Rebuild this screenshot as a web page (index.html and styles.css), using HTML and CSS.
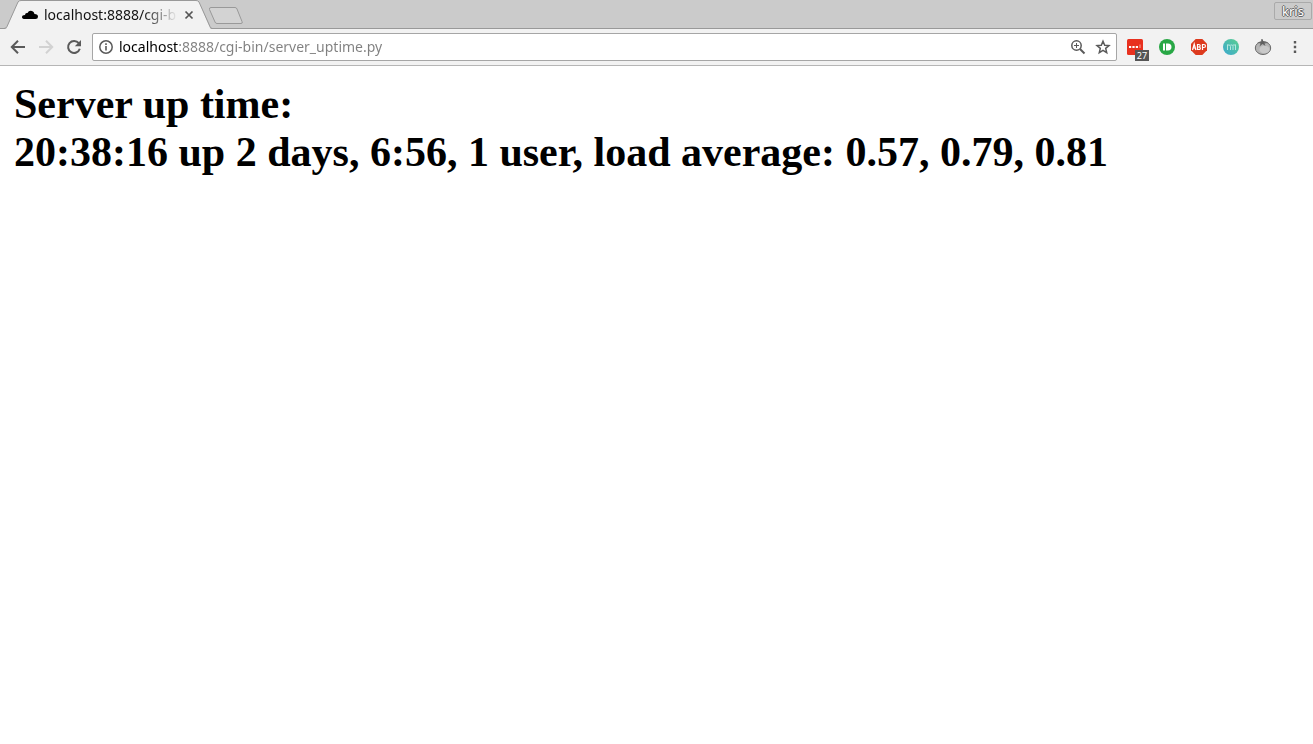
FILE: index.html
```html
<!DOCTYPE html>
<html lang="en">
<head>
<meta charset="utf-8">
<title>localhost:8888/cgi-bin/server_uptime.py</title>
<link rel="stylesheet" href="styles.css">
</head>
<body>
<header class="tabstrip">
  <div class="tab">
    <svg class="tab-shape" width="208" height="29" viewBox="0 0 208 29" aria-hidden="true">
      <path d="M0 29L2.500 28.200L14 2Q15 .5 17 .5H192Q194 .5 195 2L206 28.200L208 29Z" fill="#f2f2f2"/>
      <path d="M0 28.500Q2 28.500 3 26.500L14 2Q15 .5 17 .5H192Q194 .5 195 2L206 26.500Q207 28.500 208 28.500" fill="none" stroke="#999"/>
    </svg>
    <svg class="favicon" width="16" height="16" viewBox="0 0 16 16" aria-hidden="true"><path d="M3 12Q0 12 0 10Q0 8 3 8Q3.200 5.500 5.500 6Q7 3 10 4Q12 4.500 12.500 7Q16 7 16 9.800Q16 12 13.500 12Z"/></svg>
    <span class="tab-title">localhost:8888/cgi-b</span>
    <button class="tab-close" aria-label="Close tab"><svg width="10" height="10" viewBox="0 0 10 10"><path d="M1.500 1.500L8.500 8.500M8.500 1.500L1.500 8.500" stroke="#555" stroke-width="1.700"/></svg></button>
  </div>
  <button class="new-tab" aria-label="New tab"><svg width="36" height="18" viewBox="0 0 36 18"><path d="M3 .5H27Q28.500 .5 29 2L34 14.500Q35 16.500 33 16.500H9Q7.500 16.500 7 15L1.500 2.500Q1 .5 3 .5Z" fill="#d3d3d3" stroke="#999"/></svg></button>
  <button class="profile">kris</button>
</header>
<nav class="toolbar">
  <button class="tool" aria-label="Back"><svg width="16" height="16" viewBox="0 0 16 16"><path d="M15 8H2.500M8 1.800L1.800 8L8 14.200" fill="none" stroke="#5a5a5a" stroke-width="2"/></svg></button>
  <button class="tool" aria-label="Forward"><svg width="16" height="16" viewBox="0 0 16 16"><path d="M1 8H13.500M8 1.800L14.200 8L8 14.200" fill="none" stroke="#d2d2d2" stroke-width="2"/></svg></button>
  <button class="tool" aria-label="Reload"><svg width="16" height="16" viewBox="0 0 16 16"><path d="M12.800 4.200A6 6 0 1 0 13.800 9.800" fill="none" stroke="#5a5a5a" stroke-width="2"/><path d="M15 1V7.200H8.800Z" fill="#5a5a5a"/></svg></button>
  <div class="omnibox">
    <button class="omni-button" aria-label="Site information"><svg width="16" height="16" viewBox="0 0 16 16"><circle cx="8" cy="8" r="6.200" fill="none" stroke="#5a5a5a" stroke-width="1.500"/><path d="M8 7V11.500M8 4.300V6" stroke="#5a5a5a" stroke-width="1.600"/></svg></button>
    <input class="address" type="text" aria-label="Address" value="localhost:8888/cgi-bin/server_uptime.py" spellcheck="false">
    <button class="omni-button" aria-label="Zoom"><svg width="16" height="16" viewBox="0 0 16 16"><circle cx="6.500" cy="6.500" r="4.700" fill="none" stroke="#5a5a5a" stroke-width="1.500"/><path d="M10 10L14.500 14.500" stroke="#5a5a5a" stroke-width="2"/><path d="M4 6.500H9M6.500 4V9" stroke="#5a5a5a"/></svg></button>
    <button class="omni-button star" aria-label="Bookmark"><svg width="16" height="16" viewBox="0 0 16 16"><path d="M8 2.200L9.700 6.200L14 6.600L10.700 9.400L11.700 13.700L8 11.400L4.300 13.700L5.300 9.400L2 6.600L6.300 6.200Z" fill="none" stroke="#5a5a5a" stroke-width="1.500"/></svg></button>
  </div>
  <div class="extensions">
    <button class="tool" aria-label="Password manager, 27"><svg width="16" height="16" viewBox="0 0 16 16"><rect width="16" height="16" rx="1.500" fill="#e8311f"/><path d="M2 7H4.200V9H2ZM5.400 7H7.600V9H5.400ZM8.800 7H11V9H8.800Z" fill="#fff"/><path d="M12.500 5.500H13.500V9H12.500Z" fill="#f6a79f"/></svg><span class="count">27</span></button>
    <button class="tool" aria-label="Pushbullet"><svg width="16" height="16" viewBox="0 0 16 16"><circle cx="8" cy="8" r="8" fill="#28a745"/><path d="M4 4.500H6V11.500H4ZM7 4.500H9Q12.500 4.800 12.500 8T9 11.500H7Z" fill="#fff"/></svg></button>
    <button class="tool" aria-label="Adblock Plus"><svg width="16" height="16" viewBox="0 0 16 16"><path d="M4.700 0H11.300L16 4.700V11.300L11.300 16H4.700L0 11.300V4.700Z" fill="#dd3a1e"/><path d="M1.500 11L3.200 5L4.900 11M2 9H4.500M6.500 5V11M6.500 5.500H7.800Q9.200 5.500 9.200 6.700T7.800 8H6.500M7.800 8Q9.400 8 9.400 9.300T7.800 10.500H6.500M11.500 11V5.500H12.800Q14.500 5.500 14.500 7T12.800 8.500H11.500" fill="none" stroke="#fff" stroke-width="1.200"/></svg></button>
    <button class="tool" aria-label="Momentum"><svg width="16" height="16" viewBox="0 0 16 16"><defs><linearGradient id="teal" x1="0" y1="1" x2="1" y2="0"><stop stop-color="#3ba8cf"/><stop offset="1" stop-color="#5bcf8f"/></linearGradient></defs><circle cx="8" cy="8" r="8" fill="url(#teal)"/><path d="M4.500 11V5.500M4.500 6H6Q7.500 6 7.500 7.500V11M7.500 6H9Q10 6 10 7.500V11M12.500 5.500V11M10 6H12.500" fill="none" stroke="#b5e8df"/></svg></button>
    <button class="tool" aria-label="Tomato timer"><svg width="18" height="16" viewBox="0 0 18 16"><ellipse cx="9" cy="9" rx="7.700" ry="6.500" fill="#b5b5b5" stroke="#686868"/><ellipse cx="10.500" cy="10.500" rx="5" ry="3.800" fill="#c9c9c9"/><path d="M3 3.500L7.500 3L7 .5L8.500 0L9.500 3L14.500 3.800L10.500 4.500L11.500 7L8.500 5L5.500 7.500L6.500 4.500Z" fill="#606060"/></svg></button>
    <button class="tool" aria-label="Menu"><svg width="16" height="16" viewBox="0 0 16 16"><path d="M6.800 2H9.200V4.400H6.800ZM6.800 6.800H9.200V9.200H6.800ZM6.800 11.600H9.200V14H6.800Z" fill="#5a5a5a"/></svg></button>
  </div>
</nav>
<main class="page">
  <h2 class="uptime">Server up time:<br>20:38:16 up 2 days, 6:56, 1 user, load average: 0.57, 0.79, 0.81</h2>
</main>
</body>
</html>
```
FILE: styles.css
```css
* { box-sizing: border-box; }
body { margin: 0; background: #fff; font-family: "Noto Sans", sans-serif; }
button { margin: 0; padding: 0; border: 0; background: none; font: inherit; color: inherit; }
svg { display: block; flex: none; }

.tabstrip {
  display: flex;
  align-items: flex-start;
  height: 29px;
  padding-left: 4px;
  background: #cbcbcb;
  border-bottom: 1px solid #999;
}
.tab {
  position: relative;
  display: flex;
  align-items: center;
  width: 208px;
  height: 29px;
  padding: 0 18px;
}
.tab-shape { position: absolute; left: 0; top: 0; }
.favicon { position: relative; margin-right: 6px; }
.tab-title {
  position: relative;
  flex: none;
  width: 134px;
  overflow: hidden;
  white-space: nowrap;
  font-size: 14px;
  line-height: 20px;
  color: #111;
  -webkit-mask-image: linear-gradient(to right, #000 98px, transparent);
  mask-image: linear-gradient(to right, #000 98px, transparent);
}
.tab-close { position: relative; margin-left: 6px; }
.new-tab { margin: 7px 0 0 -4px; }
.profile {
  width: 38px;
  height: 18px;
  margin: 2px 1px 0 auto;
  border: 1px solid #aaa;
  border-radius: 2px;
  font-size: 13px;
  line-height: 16px;
  color: #fff;
  text-shadow: 1px 0 #666, -1px 0 #666, 0 1px #666, 0 -1px #666;
}

.toolbar {
  display: flex;
  align-items: center;
  gap: 12px;
  height: 37px;
  padding: 0 10px;
  background: #f2f2f2;
  border-bottom: 1px solid #b6b6b6;
}
.tool {
  position: relative;
  display: flex;
  justify-content: center;
  width: 16px;
}
.omnibox {
  display: flex;
  flex: 1;
  align-items: center;
  height: 28px;
  margin-left: -2px;
  padding: 0 5px;
  background: #fff;
  border: 1px solid #a6a6a6;
  border-radius: 2px;
}
.address {
  flex: 1;
  min-width: 0;
  height: 20px;
  margin-left: 5px;
  padding: 0;
  border: 0;
  outline: 0;
  font: 14px/20px "Noto Sans", sans-serif;
  color: transparent;
  caret-color: #000;
  background: linear-gradient(to right, #000 59px, #808080 59px);
  -webkit-background-clip: text;
  background-clip: text;
}
.star { margin-left: 9px; }
.extensions { display: flex; align-items: center; gap: 16px; margin-left: -2px; }
.count {
  position: absolute;
  left: 8px;
  top: 11px;
  width: 14px;
  height: 11px;
  background: #555;
  color: #fff;
  font-size: 9px;
  line-height: 11px;
}

.page { padding: 14px; }
.uptime {
  margin: 0;
  font: bold 42px/48px "Liberation Serif", serif;
  color: #000;
}
```
